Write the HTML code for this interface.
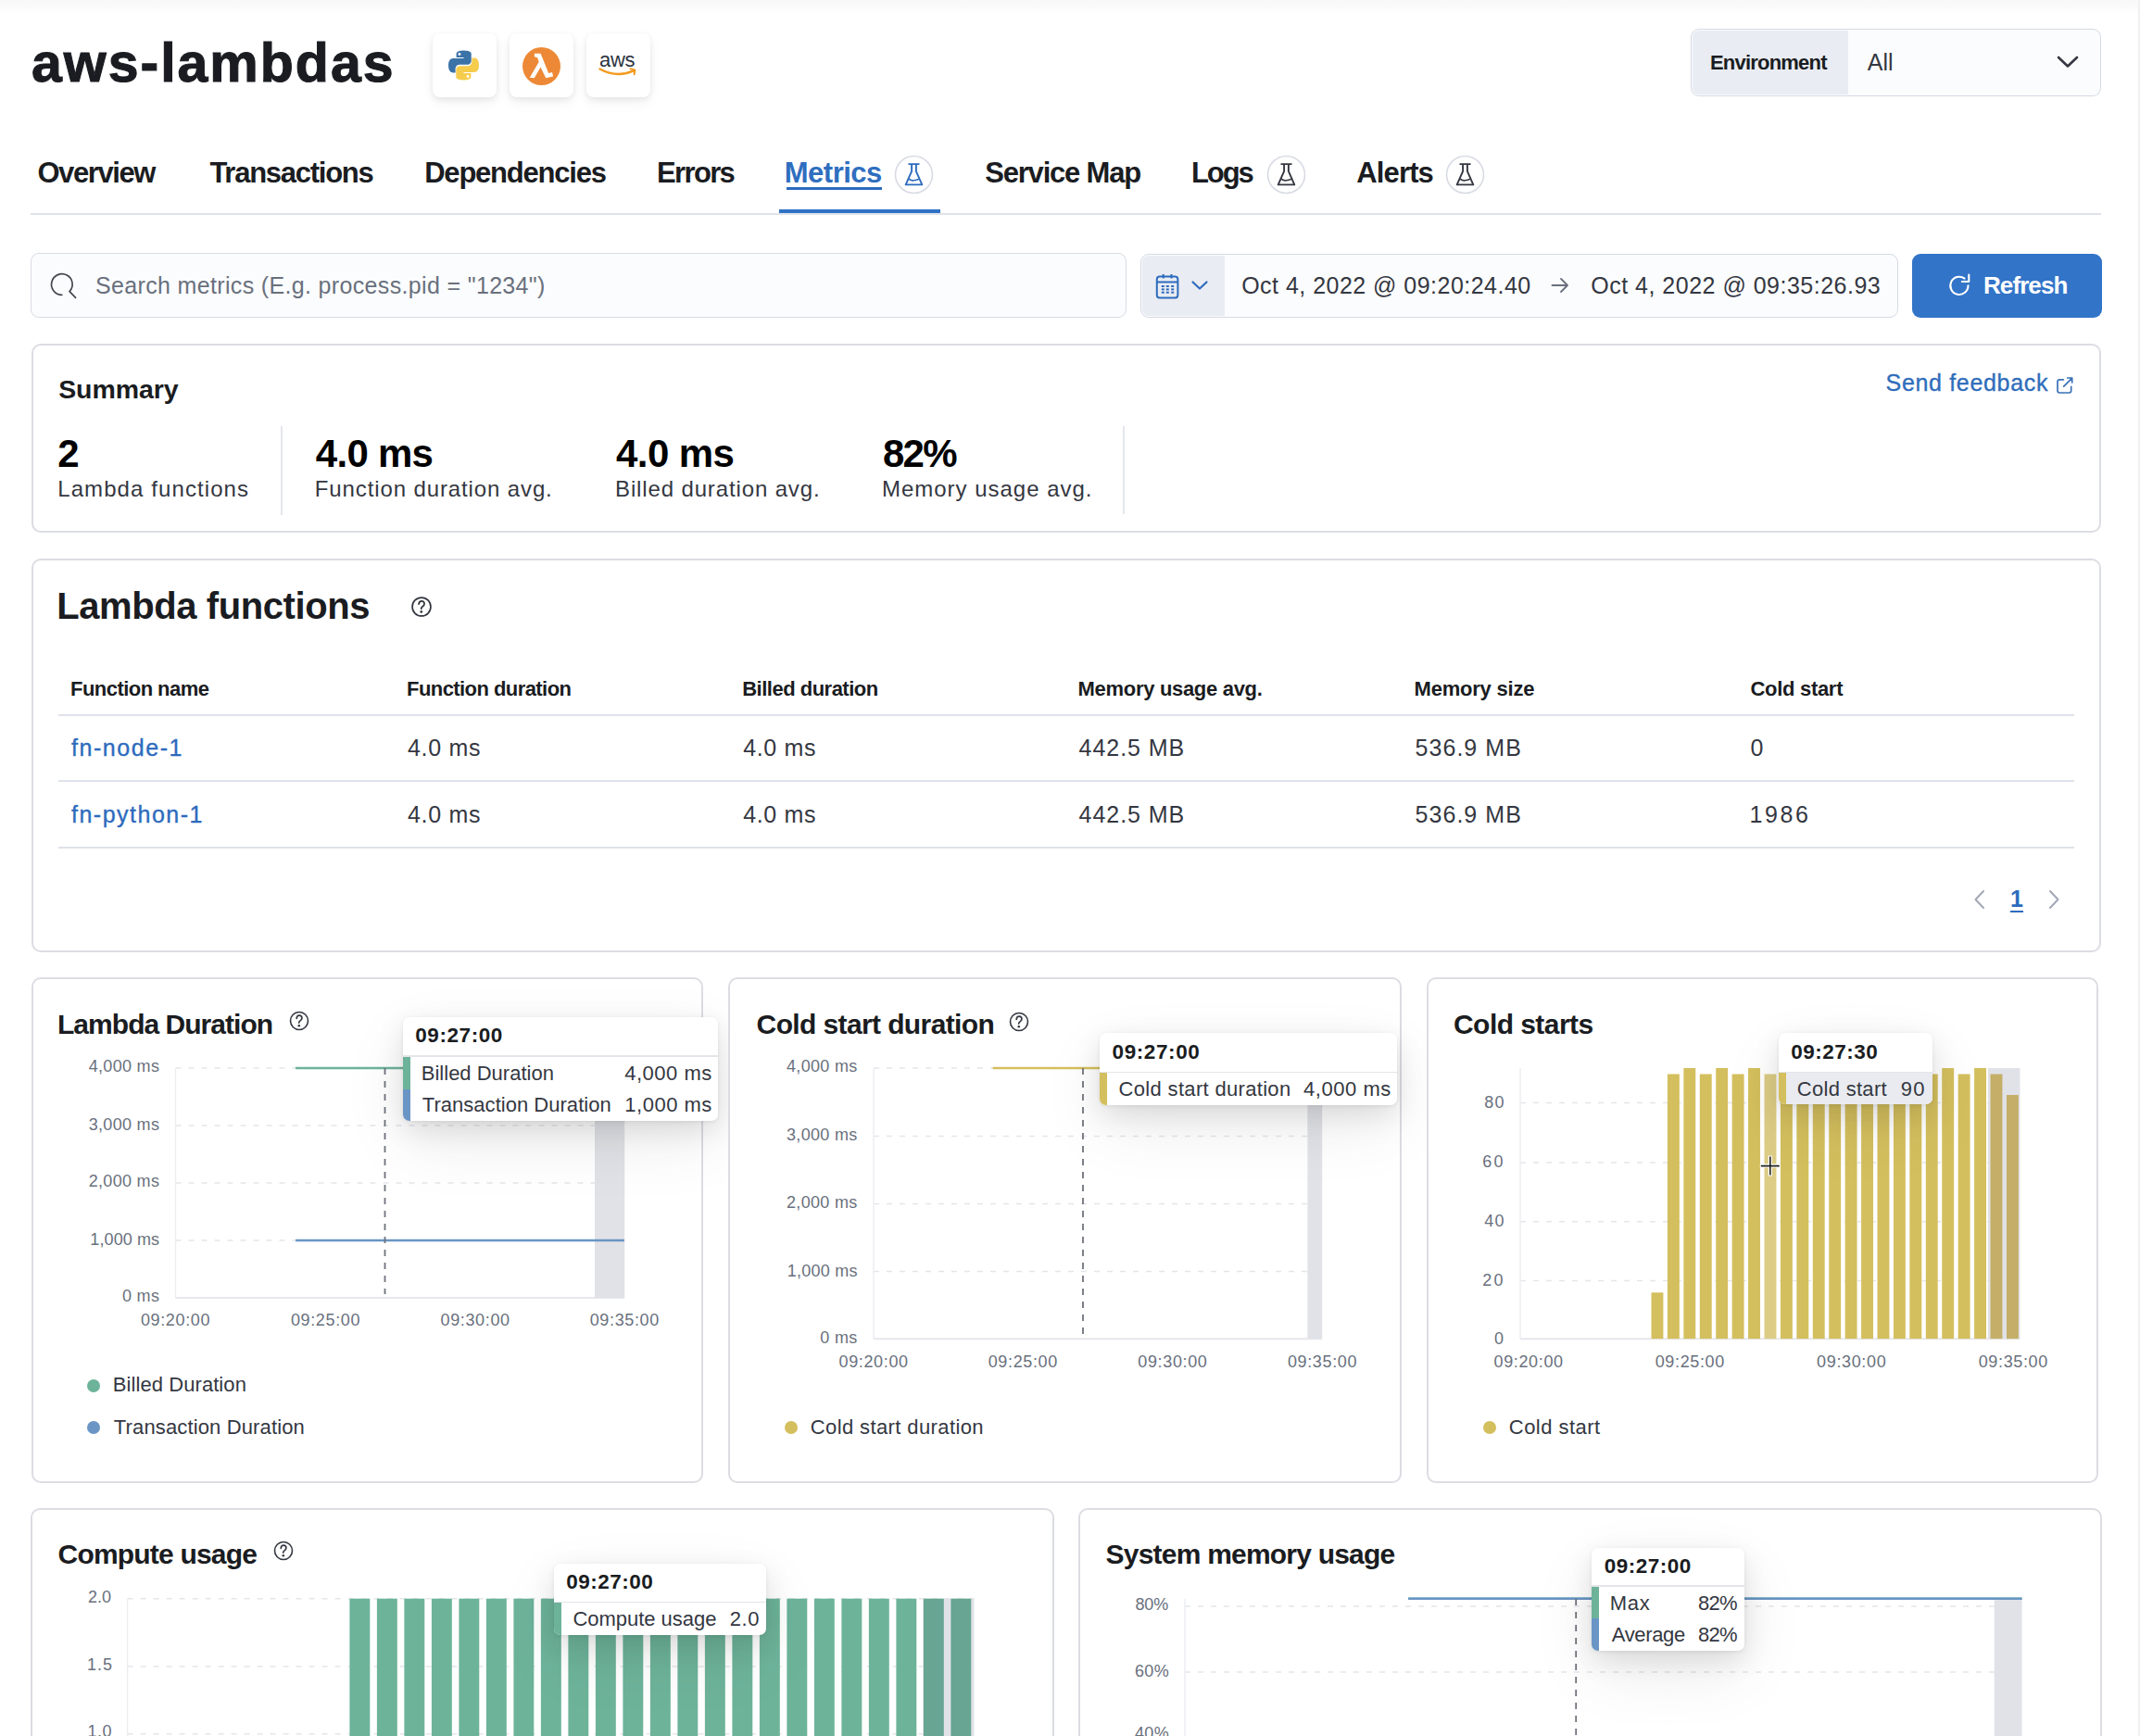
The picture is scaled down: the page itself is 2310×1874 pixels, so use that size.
<!DOCTYPE html><html><head><meta charset="utf-8"><style>
html,body{margin:0;padding:0;background:#fff;width:2310px;height:1874px;overflow:hidden;position:relative}
.t{position:absolute;white-space:nowrap;font-family:"Liberation Sans",sans-serif}
</style></head><body>
<div style="position:absolute;left:0;top:0;width:2310px;height:14px;background:linear-gradient(#f8f8f9,#fefefe)"></div>
<div style="position:absolute;right:0;top:0;width:2px;height:1874px;background:#f0f0f3"></div>
<div id="title" class="t" style="left:34.00px;top:38.65px;font-size:59px;line-height:59px;font-weight:700;color:#1a1c21;letter-spacing:2.000px;-webkit-text-stroke:1.1px #1a1c21;">aws-lambdas</div>
<div style="position:absolute;left:466.5px;top:36px;width:69px;height:69px;background:#fff;border-radius:8px;box-shadow:0 2px 6px rgba(0,0,0,0.08),0 6px 14px rgba(0,0,0,0.05)"></div>
<div style="position:absolute;left:550px;top:36px;width:69px;height:69px;background:#fff;border-radius:8px;box-shadow:0 2px 6px rgba(0,0,0,0.08),0 6px 14px rgba(0,0,0,0.05)"></div>
<div style="position:absolute;left:633.2px;top:36px;width:69px;height:69px;background:#fff;border-radius:8px;box-shadow:0 2px 6px rgba(0,0,0,0.08),0 6px 14px rgba(0,0,0,0.05)"></div>
<svg style="position:absolute;left:484px;top:54px" width="33" height="33" viewBox="0 0 110 110">
<path fill="#3b73a8" d="M54.6 2C27 2 28.7 14 28.7 14v12.4h26.4v3.7H18.2S0 28 0 55.2s15.9 26.2 15.9 26.2h9.5V68.7s-.5-15.9 15.6-15.9h26.3s15.1.2 15.1-14.6V13.9S84.7 2 54.6 2zM40 10.4a4.8 4.8 0 1 1 0 9.6 4.8 4.8 0 0 1 0-9.6z"/>
<path fill="#f5cc4c" d="M55.4 108c27.6 0 25.9-12 25.9-12V83.6H54.9v-3.7h36.9S110 82 110 54.8 94.1 28.6 94.1 28.6h-9.5v12.7s.5 15.9-15.6 15.9H42.7s-15.1-.2-15.1 14.6v24.3S25.3 108 55.4 108zm14.6-8.4a4.8 4.8 0 1 1 0-9.6 4.8 4.8 0 0 1 0 9.6z"/>
</svg>
<svg style="position:absolute;left:564px;top:51px" width="41" height="41" viewBox="0 0 40 40">
<circle cx="20" cy="20" r="20" fill="#ed8936"/>
<path fill="#fff" d="M12.6 6.7 L19.1 6.7 L27.5 27.3 L31.3 26.3 L32.2 30.7 L24.6 32.4 L19.1 21.0 L12.4 32.4 L7.6 32.0 L17.2 15.6 L15.8 10.9 L12.6 10.1 Z"/>
</svg>
<div style="position:absolute;left:647px;top:53.5px;font:400 22px/22px 'Liberation Sans',sans-serif;color:#2b3340;letter-spacing:-0.3px">aws</div>
<svg style="position:absolute;left:645px;top:72px" width="44" height="14" viewBox="0 0 44 14">
<path d="M2.5 2.5 Q21 12.5 39.5 4.2" stroke="#f39a1e" stroke-width="2.4" fill="none" stroke-linecap="round"/>
<path d="M35.5 2.2 L40.5 3.6 L39.6 8.2" stroke="#f39a1e" stroke-width="2" fill="none" stroke-linecap="round" stroke-linejoin="round"/>
</svg>
<div style="position:absolute;left:1824.5px;top:30.5px;width:443px;height:73px;box-sizing:border-box;border:1.8px solid #d5d9e4;border-radius:9px;background:#fbfcfd;overflow:hidden"></div>
<div style="position:absolute;left:1826.5px;top:32.5px;width:168.5px;height:69px;background:#e9ecf2;border-radius:7px 0 0 7px"></div>
<div id="env" class="t" style="left:1846.00px;top:56.60px;font-size:22px;line-height:22px;font-weight:700;color:#1a1c21;letter-spacing:-0.800px;">Environment</div>
<div id="envall" class="t" style="left:2015.80px;top:55.25px;font-size:25px;line-height:25px;font-weight:400;color:#343741;letter-spacing:0.000px;">All</div>
<svg style="position:absolute;left:2219px;top:58px" width="26" height="18" viewBox="0 0 26 18"><path d="M3 4 L13 13.5 L23 4" stroke="#343741" stroke-width="2.6" fill="none" stroke-linecap="round" stroke-linejoin="round"/></svg>
<div id="tab0" class="t" style="left:40.40px;top:171.45px;font-size:31px;line-height:31px;font-weight:700;color:#1a1c21;letter-spacing:-1.400px;">Overview</div>
<div id="tab1" class="t" style="left:226.40px;top:171.45px;font-size:31px;line-height:31px;font-weight:700;color:#1a1c21;letter-spacing:-1.264px;">Transactions</div>
<div id="tab2" class="t" style="left:458.20px;top:171.45px;font-size:31px;line-height:31px;font-weight:700;color:#1a1c21;letter-spacing:-1.218px;">Dependencies</div>
<div id="tab3" class="t" style="left:709.00px;top:171.45px;font-size:31px;line-height:31px;font-weight:700;color:#1a1c21;letter-spacing:-1.640px;">Errors</div>
<div id="tab4" class="t" style="left:846.80px;top:171.45px;font-size:31px;line-height:31px;font-weight:700;color:#2f6ebf;letter-spacing:-0.500px;">Metrics</div>
<div id="tab5" class="t" style="left:1063.20px;top:171.45px;font-size:31px;line-height:31px;font-weight:700;color:#1a1c21;letter-spacing:-1.190px;">Service Map</div>
<div id="tab6" class="t" style="left:1286.00px;top:171.45px;font-size:31px;line-height:31px;font-weight:700;color:#1a1c21;letter-spacing:-2.067px;">Logs</div>
<div id="tab7" class="t" style="left:1464.20px;top:171.45px;font-size:31px;line-height:31px;font-weight:700;color:#1a1c21;letter-spacing:-0.840px;">Alerts</div>
<div style="position:absolute;left:848.5px;top:202.3px;width:103.5px;height:2.4px;background:#2d6bbd"></div>
<div style="position:absolute;left:841px;top:226px;width:173.5px;height:4.5px;background:#2f72c5"></div>
<div style="position:absolute;left:33px;top:229.8px;width:2235px;height:2px;background:#dfe2ea"></div>
<svg style="position:absolute;left:965.4px;top:166.8px" width="43" height="43" viewBox="-21.5 -21.5 43 43">
<circle cx="0" cy="0" r="20" fill="none" stroke="#d8dbe4" stroke-width="1.6"/>
<path d="M-5.3 -11.4 H5.3 M-2.4 -11.4 V-3.6 L-8.8 10.9 H8.8 L2.4 -3.6 V-11.4" stroke="#2d6bbd" stroke-width="1.9" fill="none" stroke-linejoin="round" stroke-linecap="round"/>
<path d="M-5.6 4.3 Q-4 6.8 0 6.3 Q3 6 5.6 4.6" stroke="#2d6bbd" stroke-width="1.6" fill="none"/>
</svg>
<svg style="position:absolute;left:1367.2px;top:166.8px" width="43" height="43" viewBox="-21.5 -21.5 43 43">
<circle cx="0" cy="0" r="20" fill="none" stroke="#d8dbe4" stroke-width="1.6"/>
<path d="M-5.3 -11.4 H5.3 M-2.4 -11.4 V-3.6 L-8.8 10.9 H8.8 L2.4 -3.6 V-11.4" stroke="#343741" stroke-width="1.9" fill="none" stroke-linejoin="round" stroke-linecap="round"/>
<path d="M-5.6 4.3 Q-4 6.8 0 6.3 Q3 6 5.6 4.6" stroke="#343741" stroke-width="1.6" fill="none"/>
</svg>
<svg style="position:absolute;left:1560.2px;top:166.8px" width="43" height="43" viewBox="-21.5 -21.5 43 43">
<circle cx="0" cy="0" r="20" fill="none" stroke="#d8dbe4" stroke-width="1.6"/>
<path d="M-5.3 -11.4 H5.3 M-2.4 -11.4 V-3.6 L-8.8 10.9 H8.8 L2.4 -3.6 V-11.4" stroke="#343741" stroke-width="1.9" fill="none" stroke-linejoin="round" stroke-linecap="round"/>
<path d="M-5.6 4.3 Q-4 6.8 0 6.3 Q3 6 5.6 4.6" stroke="#343741" stroke-width="1.6" fill="none"/>
</svg>
<div style="position:absolute;left:33px;top:273px;width:1183px;height:70px;box-sizing:border-box;border:1.8px solid #d9dce5;border-radius:9px;background:#fbfcfd"></div>
<svg style="position:absolute;left:48.5px;top:288.5px" width="36" height="36" viewBox="-18 -18 36 36"><path d="M-0.2 11.3 A11.3 11.3 0 1 1 8.1 7.7 L14.6 14.4" stroke="#45474f" stroke-width="1.7" fill="none" stroke-linecap="round" stroke-linejoin="miter"/></svg>
<div id="search" class="t" style="left:103.00px;top:295.55px;font-size:25px;line-height:25px;font-weight:400;color:#69707d;letter-spacing:0.341px;">Search metrics (E.g. process.pid = "1234")</div>
<div style="position:absolute;left:1231px;top:273.5px;width:818px;height:69px;box-sizing:border-box;border:1.8px solid #d5d9e4;border-radius:9px;background:#fbfcfd;overflow:hidden"></div>
<div style="position:absolute;left:1233px;top:275.5px;width:89px;height:65px;background:#e9ecf2;border-radius:7px 0 0 7px"></div>
<svg style="position:absolute;left:1246px;top:294px" width="28" height="30" viewBox="0 0 28 30">
<rect x="2.8" y="4.6" width="22.6" height="23" rx="3" stroke="#2d6bbd" stroke-width="2" fill="none"/>
<path d="M2.8 10.6 H25.4 M9.7 2 V6.6 M18.5 2 V6.6" stroke="#2d6bbd" stroke-width="2" fill="none"/>
<g fill="#2d6bbd"><rect x="7.8" y="14" width="3" height="2"/><rect x="12.8" y="14" width="3" height="2"/><rect x="18.2" y="14" width="3" height="2"/>
<rect x="7.8" y="17.4" width="3" height="2"/><rect x="12.8" y="17.4" width="3" height="2"/><rect x="18.2" y="17.4" width="3" height="2"/>
<rect x="7.8" y="20.7" width="3" height="2"/><rect x="12.8" y="20.7" width="3" height="2"/><rect x="18.2" y="20.7" width="3" height="2"/></g>
</svg>
<svg style="position:absolute;left:1285px;top:301px" width="20" height="14" viewBox="0 0 20 14"><path d="M2.5 3.5 L10 10.5 L17.5 3.5" stroke="#2d6bbd" stroke-width="2.2" fill="none" stroke-linecap="round" stroke-linejoin="round"/></svg>
<div id="date1" class="t" style="left:1340.20px;top:295.55px;font-size:25px;line-height:25px;font-weight:400;color:#343741;letter-spacing:0.475px;">Oct 4, 2022 @ 09:20:24.40</div>
<svg style="position:absolute;left:1673px;top:297px" width="22" height="22" viewBox="0 0 22 22"><path d="M2.5 11 H19 M12 4 L19 11 L12 18" stroke="#69707d" stroke-width="1.8" fill="none" stroke-linecap="round" stroke-linejoin="round"/></svg>
<div id="date2" class="t" style="left:1717.20px;top:295.55px;font-size:25px;line-height:25px;font-weight:400;color:#343741;letter-spacing:0.500px;">Oct 4, 2022 @ 09:35:26.93</div>
<div style="position:absolute;left:2063.5px;top:273.5px;width:205px;height:69px;background:#3274c8;border-radius:9px"></div>
<svg style="position:absolute;left:2102.5px;top:294px" width="26" height="28" viewBox="0 0 26 28">
<path d="M21.5 14.3 A9.6 9.6 0 1 1 17.6 6.6" stroke="#fff" stroke-width="2.1" fill="none" stroke-linecap="round"/>
<path d="M22.3 2.5 V10 H14.9" stroke="#fff" stroke-width="2.1" fill="none" stroke-linecap="round" stroke-linejoin="round"/>
</svg>
<div id="refresh" class="t" style="left:2141.00px;top:295.40px;font-size:26px;line-height:26px;font-weight:700;color:#ffffff;letter-spacing:-0.917px;">Refresh</div>
<div style="position:absolute;left:33.6px;top:370.7px;width:2234.5px;height:204.5px;box-sizing:border-box;border:2px solid #dcdde3;border-radius:10px;background:#fff"></div>
<div id="summary" class="t" style="left:63.20px;top:406.27px;font-size:28.5px;line-height:28.5px;font-weight:700;color:#1a1c21;letter-spacing:-0.083px;">Summary</div>
<div id="feedback" class="t" style="left:2035.60px;top:401.25px;font-size:25px;line-height:25px;font-weight:400;color:#2f6dbb;letter-spacing:0.667px;-webkit-text-stroke:0.35px #2f6dbb;">Send feedback</div>
<svg style="position:absolute;left:2210px;top:400px" width="35" height="30" viewBox="0 0 35 30">
<path d="M17.4 9.8 H13.2 Q11 9.8 11 12 V21.8 Q11 24 13.2 24 H23.5 Q25.7 24 25.7 21.8 V17.4" stroke="#3a71b8" stroke-width="1.7" fill="none" stroke-linecap="round"/>
<path d="M17.7 17.2 L26.4 8.4 M21.7 8.0 H26.7 V13.0" stroke="#3a71b8" stroke-width="1.7" fill="none" stroke-linecap="round" stroke-linejoin="round"/>
</svg>
<div id="sv0" class="t" style="left:62.20px;top:468.70px;font-size:42px;line-height:42px;font-weight:700;color:#000000;letter-spacing:0.000px;">2</div>
<div id="sl0" class="t" style="left:62.20px;top:516.40px;font-size:24px;line-height:24px;font-weight:400;color:#343741;letter-spacing:1.093px;">Lambda functions</div>
<div id="sv1" class="t" style="left:340.80px;top:468.70px;font-size:42px;line-height:42px;font-weight:700;color:#000000;letter-spacing:-0.720px;">4.0 ms</div>
<div id="sl1" class="t" style="left:339.80px;top:516.40px;font-size:24px;line-height:24px;font-weight:400;color:#343741;letter-spacing:0.881px;">Function duration avg.</div>
<div id="sv2" class="t" style="left:665.00px;top:468.70px;font-size:42px;line-height:42px;font-weight:700;color:#000000;letter-spacing:-0.560px;">4.0 ms</div>
<div id="sl2" class="t" style="left:664.00px;top:516.40px;font-size:24px;line-height:24px;font-weight:400;color:#343741;letter-spacing:0.868px;">Billed duration avg.</div>
<div id="sv3" class="t" style="left:953.00px;top:468.70px;font-size:42px;line-height:42px;font-weight:700;color:#000000;letter-spacing:-1.750px;">82%</div>
<div id="sl3" class="t" style="left:952.00px;top:516.40px;font-size:24px;line-height:24px;font-weight:400;color:#343741;letter-spacing:0.981px;">Memory usage avg.</div>
<div style="position:absolute;left:303.3px;top:459.8px;width:2px;height:96px;background:#e3e6ed"></div>
<div style="position:absolute;left:1212.3px;top:460px;width:2px;height:95px;background:#e3e6ed"></div>
<div style="position:absolute;left:33.6px;top:602.8px;width:2234.5px;height:425.6px;box-sizing:border-box;border:2px solid #dcdde3;border-radius:10px;background:#fff"></div>
<div id="lftitle" class="t" style="left:61.20px;top:633.50px;font-size:40px;line-height:40px;font-weight:700;color:#1a1c21;letter-spacing:-0.413px;">Lambda functions</div>
<svg style="position:absolute;left:442.7px;top:642.5px" width="24" height="24" viewBox="-12 -12 24 24">
<g transform="scale(1.048)"><circle cx="0" cy="0" r="9.5" stroke="#343741" stroke-width="1.6" fill="none"/>
<path d="M-2.8 -2.7 Q-2.5 -5.9 0.1 -5.9 Q2.9 -5.9 2.9 -3.2 Q2.9 -1.5 1.3 -0.4 Q-0.3 0.7 -0.3 2.1" stroke="#343741" stroke-width="1.7" fill="none" stroke-linecap="round"/>
<circle cx="-0.2" cy="5.2" r="1.3" fill="#343741"/></g>
</svg>
<div id="th0" class="t" style="left:76.00px;top:733.30px;font-size:22px;line-height:22px;font-weight:700;color:#1a1c21;letter-spacing:-0.542px;">Function name</div>
<div id="th1" class="t" style="left:439.00px;top:733.30px;font-size:22px;line-height:22px;font-weight:700;color:#1a1c21;letter-spacing:-0.562px;">Function duration</div>
<div id="th2" class="t" style="left:801.20px;top:733.30px;font-size:22px;line-height:22px;font-weight:700;color:#1a1c21;letter-spacing:-0.500px;">Billed duration</div>
<div id="th3" class="t" style="left:1163.60px;top:733.30px;font-size:22px;line-height:22px;font-weight:700;color:#1a1c21;letter-spacing:-0.312px;">Memory usage avg.</div>
<div id="th4" class="t" style="left:1526.60px;top:733.30px;font-size:22px;line-height:22px;font-weight:700;color:#1a1c21;letter-spacing:-0.220px;">Memory size</div>
<div id="th5" class="t" style="left:1889.40px;top:733.30px;font-size:22px;line-height:22px;font-weight:700;color:#1a1c21;letter-spacing:-0.289px;">Cold start</div>
<div style="position:absolute;left:63px;top:771.2px;width:2176px;height:2px;background:#dfe2ea"></div>
<div id="td00" class="t" style="left:77.00px;top:795.35px;font-size:25px;line-height:25px;font-weight:400;color:#2d6bbd;letter-spacing:1.550px;-webkit-text-stroke:0.35px #2d6bbd;">fn-node-1</div>
<div id="td01" class="t" style="left:440.00px;top:795.35px;font-size:25px;line-height:25px;font-weight:400;color:#343741;letter-spacing:0.700px;">4.0 ms</div>
<div id="td02" class="t" style="left:802.20px;top:795.35px;font-size:25px;line-height:25px;font-weight:400;color:#343741;letter-spacing:0.640px;">4.0 ms</div>
<div id="td03" class="t" style="left:1164.60px;top:795.35px;font-size:25px;line-height:25px;font-weight:400;color:#343741;letter-spacing:0.943px;">442.5 MB</div>
<div id="td04" class="t" style="left:1527.60px;top:795.35px;font-size:25px;line-height:25px;font-weight:400;color:#343741;letter-spacing:1.029px;">536.9 MB</div>
<div id="td05" class="t" style="left:1889.40px;top:795.35px;font-size:25px;line-height:25px;font-weight:400;color:#343741;letter-spacing:0.000px;">0</div>
<div id="td10" class="t" style="left:77.00px;top:867.35px;font-size:25px;line-height:25px;font-weight:400;color:#2d6bbd;letter-spacing:1.500px;-webkit-text-stroke:0.35px #2d6bbd;">fn-python-1</div>
<div id="td11" class="t" style="left:440.00px;top:867.35px;font-size:25px;line-height:25px;font-weight:400;color:#343741;letter-spacing:0.700px;">4.0 ms</div>
<div id="td12" class="t" style="left:802.20px;top:867.35px;font-size:25px;line-height:25px;font-weight:400;color:#343741;letter-spacing:0.640px;">4.0 ms</div>
<div id="td13" class="t" style="left:1164.60px;top:867.35px;font-size:25px;line-height:25px;font-weight:400;color:#343741;letter-spacing:0.943px;">442.5 MB</div>
<div id="td14" class="t" style="left:1527.60px;top:867.35px;font-size:25px;line-height:25px;font-weight:400;color:#343741;letter-spacing:1.029px;">536.9 MB</div>
<div id="td15" class="t" style="left:1888.40px;top:867.35px;font-size:25px;line-height:25px;font-weight:400;color:#343741;letter-spacing:2.600px;">1986</div>
<div style="position:absolute;left:63px;top:842px;width:2176px;height:2px;background:#dfe2ea"></div>
<div style="position:absolute;left:63px;top:913.5px;width:2176px;height:2px;background:#dfe2ea"></div>
<svg style="position:absolute;left:2126px;top:958px" width="22" height="26" viewBox="0 0 22 26"><path d="M15 4 L6.5 13 L15 22" stroke="#a3a8b5" stroke-width="2" fill="none" stroke-linecap="round" stroke-linejoin="round"/></svg>
<div id="pg1" class="t" style="left:2170.00px;top:957.75px;font-size:25px;line-height:25px;font-weight:700;color:#2d6bbd;letter-spacing:0.000px;">1</div>
<div style="position:absolute;left:2170px;top:983px;width:13.5px;height:2.4px;background:#2d6bbd"></div>
<svg style="position:absolute;left:2206px;top:958px" width="22" height="26" viewBox="0 0 22 26"><path d="M7 4 L15.5 13 L7 22" stroke="#a3a8b5" stroke-width="2" fill="none" stroke-linecap="round" stroke-linejoin="round"/></svg>
<div style="position:absolute;left:33.6px;top:1055.4px;width:725.4px;height:545.2px;box-sizing:border-box;border:2px solid #dcdde3;border-radius:10px;background:#fff"></div>
<div id="c1t" class="t" style="left:62.00px;top:1090.50px;font-size:30px;line-height:30px;font-weight:700;color:#1a1c21;letter-spacing:-0.971px;">Lambda Duration</div>
<svg style="position:absolute;left:311.2px;top:1090px" width="24" height="24" viewBox="-12 -12 24 24">
<g transform="scale(1.000)"><circle cx="0" cy="0" r="9.5" stroke="#343741" stroke-width="1.6" fill="none"/>
<path d="M-2.8 -2.7 Q-2.5 -5.9 0.1 -5.9 Q2.9 -5.9 2.9 -3.2 Q2.9 -1.5 1.3 -0.4 Q-0.3 0.7 -0.3 2.1" stroke="#343741" stroke-width="1.7" fill="none" stroke-linecap="round"/>
<circle cx="-0.2" cy="5.2" r="1.3" fill="#343741"/></g>
</svg>
<svg style="position:absolute;left:0;top:0" width="2310" height="1874" viewBox="0 0 2310 1874">
<line x1="189.5" y1="1153" x2="674" y2="1153" stroke="#e5e6ea" stroke-width="1.5" stroke-dasharray="6 8"/>
<line x1="189.5" y1="1215" x2="674" y2="1215" stroke="#e5e6ea" stroke-width="1.5" stroke-dasharray="6 8"/>
<line x1="189.5" y1="1277" x2="674" y2="1277" stroke="#e5e6ea" stroke-width="1.5" stroke-dasharray="6 8"/>
<line x1="189.5" y1="1339" x2="674" y2="1339" stroke="#e5e6ea" stroke-width="1.5" stroke-dasharray="6 8"/>
<line x1="189.5" y1="1153" x2="189.5" y2="1401" stroke="#eceef2" stroke-width="1.5"/>
<line x1="189.5" y1="1401" x2="674" y2="1401" stroke="#e6e8ee" stroke-width="2"/>
<rect x="642" y="1153" width="32.2" height="248" fill="#e1e2e7" />
<line x1="319" y1="1153" x2="674" y2="1153" stroke="#6db39a" stroke-width="2.6"/>
<line x1="319" y1="1339" x2="674" y2="1339" stroke="#6a95c5" stroke-width="2.6"/>
<line x1="415.5" y1="1153" x2="415.5" y2="1397" stroke="#6f737d" stroke-width="1.8" stroke-dasharray="7 7"/>
</svg>
<div id="c1y0" class="t" style="right:2137.80px;top:1142.20px;font-size:18px;line-height:18px;font-weight:400;color:#69707d;letter-spacing:0.300px;">4,000 ms</div>
<div id="c1y1" class="t" style="right:2137.80px;top:1205.00px;font-size:18px;line-height:18px;font-weight:400;color:#69707d;letter-spacing:0.300px;">3,000 ms</div>
<div id="c1y2" class="t" style="right:2137.80px;top:1266.20px;font-size:18px;line-height:18px;font-weight:400;color:#69707d;letter-spacing:0.300px;">2,000 ms</div>
<div id="c1y3" class="t" style="right:2137.80px;top:1328.90px;font-size:18px;line-height:18px;font-weight:400;color:#69707d;letter-spacing:0.100px;">1,000 ms</div>
<div id="c1y4" class="t" style="right:2137.80px;top:1390.20px;font-size:18px;line-height:18px;font-weight:400;color:#69707d;letter-spacing:0.300px;">0 ms</div>
<div id="c1x0" class="t" style="left:189.50px;transform:translateX(-50%);top:1415.70px;font-size:18px;line-height:18px;font-weight:400;color:#69707d;letter-spacing:0.643px;">09:20:00</div>
<div id="c1x1" class="t" style="left:351.50px;transform:translateX(-50%);top:1415.70px;font-size:18px;line-height:18px;font-weight:400;color:#69707d;letter-spacing:0.643px;">09:25:00</div>
<div id="c1x2" class="t" style="left:513.10px;transform:translateX(-50%);top:1415.70px;font-size:18px;line-height:18px;font-weight:400;color:#69707d;letter-spacing:0.643px;">09:30:00</div>
<div id="c1x3" class="t" style="left:674.30px;transform:translateX(-50%);top:1415.70px;font-size:18px;line-height:18px;font-weight:400;color:#69707d;letter-spacing:0.643px;">09:35:00</div>
<div style="position:absolute;left:94px;top:1488.5px;width:14px;height:14px;background:#6db39a;border-radius:50%"></div>
<div id="c1l0" class="t" style="left:121.80px;top:1484.00px;font-size:22px;line-height:22px;font-weight:400;color:#343741;letter-spacing:0.071px;">Billed Duration</div>
<div style="position:absolute;left:94px;top:1534px;width:14px;height:14px;background:#6a95c5;border-radius:50%"></div>
<div id="c1l1" class="t" style="left:122.80px;top:1529.50px;font-size:22px;line-height:22px;font-weight:400;color:#343741;letter-spacing:0.137px;">Transaction Duration</div>
<div style="position:absolute;left:434.5px;top:1097.5px;width:340.5px;height:112.5px;background:#fff;border-radius:7px;box-shadow:0 1px 4px rgba(0,0,0,0.08),0 10px 30px rgba(0,0,0,0.10),0 24px 70px rgba(0,0,0,0.08);overflow:hidden"></div>
<div id="c1tth" class="t" style="left:448.20px;top:1106.58px;font-size:22.5px;line-height:22.5px;font-weight:700;color:#1a1c21;letter-spacing:0.586px;">09:27:00</div>
<div style="position:absolute;left:434.5px;top:1139.2px;width:340.5px;height:1.6px;background:#e3e5ea"></div>
<div style="position:absolute;left:434.5px;top:1140.8px;width:8.2px;height:35.200000000000045px;background:#6db39a;border-radius:0"></div>
<div style="position:absolute;left:434.5px;top:1176px;width:8.2px;height:34px;background:#6a95c5;border-radius:0 0 0 7px"></div>
<div id="c1ttr0" class="t" style="left:454.80px;top:1148.00px;font-size:22px;line-height:22px;font-weight:400;color:#343741;letter-spacing:0.000px;">Billed Duration</div>
<div id="c1ttv0" class="t" style="right:1541.20px;top:1148.00px;font-size:22px;line-height:22px;font-weight:400;color:#343741;letter-spacing:0.514px;">4,000 ms</div>
<div id="c1ttr1" class="t" style="left:455.80px;top:1182.40px;font-size:22px;line-height:22px;font-weight:400;color:#343741;letter-spacing:0.026px;">Transaction Duration</div>
<div id="c1ttv1" class="t" style="right:1541.20px;top:1182.40px;font-size:22px;line-height:22px;font-weight:400;color:#343741;letter-spacing:0.500px;">1,000 ms</div>
<div style="position:absolute;left:786.4px;top:1055.4px;width:726.2px;height:545.2px;box-sizing:border-box;border:2px solid #dcdde3;border-radius:10px;background:#fff"></div>
<div id="c2t" class="t" style="left:816.60px;top:1090.50px;font-size:30px;line-height:30px;font-weight:700;color:#1a1c21;letter-spacing:-0.617px;">Cold start duration</div>
<svg style="position:absolute;left:1087.8px;top:1090.5px" width="24" height="24" viewBox="-12 -12 24 24">
<g transform="scale(1.000)"><circle cx="0" cy="0" r="9.5" stroke="#343741" stroke-width="1.6" fill="none"/>
<path d="M-2.8 -2.7 Q-2.5 -5.9 0.1 -5.9 Q2.9 -5.9 2.9 -3.2 Q2.9 -1.5 1.3 -0.4 Q-0.3 0.7 -0.3 2.1" stroke="#343741" stroke-width="1.7" fill="none" stroke-linecap="round"/>
<circle cx="-0.2" cy="5.2" r="1.3" fill="#343741"/></g>
</svg>
<svg style="position:absolute;left:0;top:0" width="2310" height="1874" viewBox="0 0 2310 1874">
<line x1="943" y1="1153" x2="1427" y2="1153" stroke="#e5e6ea" stroke-width="1.5" stroke-dasharray="6 8"/>
<line x1="943" y1="1226.6" x2="1427" y2="1226.6" stroke="#e5e6ea" stroke-width="1.5" stroke-dasharray="6 8"/>
<line x1="943" y1="1299.5" x2="1427" y2="1299.5" stroke="#e5e6ea" stroke-width="1.5" stroke-dasharray="6 8"/>
<line x1="943" y1="1372.4" x2="1427" y2="1372.4" stroke="#e5e6ea" stroke-width="1.5" stroke-dasharray="6 8"/>
<line x1="943" y1="1153" x2="943" y2="1445" stroke="#eceef2" stroke-width="1.5"/>
<line x1="943" y1="1445.2" x2="1427" y2="1445.2" stroke="#e6e8ee" stroke-width="2"/>
<rect x="1411.4" y="1153" width="15.8" height="292" fill="#e1e2e7" />
<line x1="1071.7" y1="1153" x2="1427" y2="1153" stroke="#d4bf5e" stroke-width="2.6"/>
<line x1="1169" y1="1153" x2="1169" y2="1445" stroke="#6f737d" stroke-width="1.8" stroke-dasharray="7 7"/>
</svg>
<div id="c2y0" class="t" style="right:1384.40px;top:1142.20px;font-size:18px;line-height:18px;font-weight:400;color:#69707d;letter-spacing:0.314px;">4,000 ms</div>
<div id="c2y1" class="t" style="right:1384.40px;top:1216.00px;font-size:18px;line-height:18px;font-weight:400;color:#69707d;letter-spacing:0.314px;">3,000 ms</div>
<div id="c2y2" class="t" style="right:1384.40px;top:1288.90px;font-size:18px;line-height:18px;font-weight:400;color:#69707d;letter-spacing:0.314px;">2,000 ms</div>
<div id="c2y3" class="t" style="right:1384.40px;top:1362.80px;font-size:18px;line-height:18px;font-weight:400;color:#69707d;letter-spacing:0.214px;">1,000 ms</div>
<div id="c2y4" class="t" style="right:1384.40px;top:1435.00px;font-size:18px;line-height:18px;font-weight:400;color:#69707d;letter-spacing:0.333px;">0 ms</div>
<div id="c2x0" class="t" style="left:943.10px;transform:translateX(-50%);top:1461.20px;font-size:18px;line-height:18px;font-weight:400;color:#69707d;letter-spacing:0.643px;">09:20:00</div>
<div id="c2x1" class="t" style="left:1104.30px;transform:translateX(-50%);top:1461.20px;font-size:18px;line-height:18px;font-weight:400;color:#69707d;letter-spacing:0.643px;">09:25:00</div>
<div id="c2x2" class="t" style="left:1265.90px;transform:translateX(-50%);top:1461.20px;font-size:18px;line-height:18px;font-weight:400;color:#69707d;letter-spacing:0.643px;">09:30:00</div>
<div id="c2x3" class="t" style="left:1427.50px;transform:translateX(-50%);top:1461.20px;font-size:18px;line-height:18px;font-weight:400;color:#69707d;letter-spacing:0.643px;">09:35:00</div>
<div style="position:absolute;left:847px;top:1534px;width:14px;height:14px;background:#d4bf5e;border-radius:50%"></div>
<div id="c2l0" class="t" style="left:874.80px;top:1529.50px;font-size:22px;line-height:22px;font-weight:400;color:#343741;letter-spacing:0.389px;">Cold start duration</div>
<div style="position:absolute;left:1187.3px;top:1115.4px;width:320.70000000000005px;height:77.59999999999991px;background:#fff;border-radius:7px;box-shadow:0 1px 4px rgba(0,0,0,0.08),0 10px 30px rgba(0,0,0,0.10),0 24px 70px rgba(0,0,0,0.08);overflow:hidden"></div>
<div id="c2tth" class="t" style="left:1200.60px;top:1124.78px;font-size:22.5px;line-height:22.5px;font-weight:700;color:#1a1c21;letter-spacing:0.586px;">09:27:00</div>
<div style="position:absolute;left:1187.3px;top:1156.5px;width:320.70000000000005px;height:1.6px;background:#e3e5ea"></div>
<div style="position:absolute;left:1187.3px;top:1158px;width:8.2px;height:35px;background:#d4bf5e;border-radius:0 0 0 7px"></div>
<div id="c2ttr0" class="t" style="left:1207.60px;top:1165.20px;font-size:22px;line-height:22px;font-weight:400;color:#343741;letter-spacing:0.322px;">Cold start duration</div>
<div id="c2ttv0" class="t" style="right:808.20px;top:1165.20px;font-size:22px;line-height:22px;font-weight:400;color:#343741;letter-spacing:0.529px;">4,000 ms</div>
<div style="position:absolute;left:1540px;top:1055.4px;width:725.3px;height:545.2px;box-sizing:border-box;border:2px solid #dcdde3;border-radius:10px;background:#fff"></div>
<div id="c3t" class="t" style="left:1569.00px;top:1090.50px;font-size:30px;line-height:30px;font-weight:700;color:#1a1c21;letter-spacing:-0.550px;">Cold starts</div>
<svg style="position:absolute;left:0;top:0" width="2310" height="1874" viewBox="0 0 2310 1874">
<line x1="1641" y1="1190.5" x2="2180.5" y2="1190.5" stroke="#e5e6ea" stroke-width="1.5" stroke-dasharray="6 8"/>
<line x1="1641" y1="1255" x2="2180.5" y2="1255" stroke="#e5e6ea" stroke-width="1.5" stroke-dasharray="6 8"/>
<line x1="1641" y1="1318.8" x2="2180.5" y2="1318.8" stroke="#e5e6ea" stroke-width="1.5" stroke-dasharray="6 8"/>
<line x1="1641" y1="1382.6" x2="2180.5" y2="1382.6" stroke="#e5e6ea" stroke-width="1.5" stroke-dasharray="6 8"/>
<line x1="1641" y1="1153" x2="1641" y2="1445" stroke="#eceef2" stroke-width="1.5"/>
<line x1="1641" y1="1445.2" x2="2180.5" y2="1445.2" stroke="#e6e8ee" stroke-width="2"/>
<rect x="2145.9" y="1153" width="34.6" height="292" fill="#e1e2e7" />
<rect x="1782.50" y="1395.3" width="12.9" height="49.90000000000009" fill="#d4bf5e" />
<rect x="1799.93" y="1159.5" width="12.9" height="285.70000000000005" fill="#d4bf5e" />
<rect x="1817.36" y="1153" width="12.9" height="292.20000000000005" fill="#d4bf5e" />
<rect x="1834.79" y="1159.5" width="12.9" height="285.70000000000005" fill="#d4bf5e" />
<rect x="1852.22" y="1153" width="12.9" height="292.20000000000005" fill="#d4bf5e" />
<rect x="1869.65" y="1159.5" width="12.9" height="285.70000000000005" fill="#d4bf5e" />
<rect x="1887.08" y="1153" width="12.9" height="292.20000000000005" fill="#d4bf5e" />
<rect x="1904.51" y="1159.5" width="12.9" height="285.70000000000005" fill="#ddcc86" />
<rect x="1921.94" y="1153" width="12.9" height="292.20000000000005" fill="#d4bf5e" />
<rect x="1939.37" y="1159.5" width="12.9" height="285.70000000000005" fill="#d4bf5e" />
<rect x="1956.80" y="1153" width="12.9" height="292.20000000000005" fill="#d4bf5e" />
<rect x="1974.23" y="1159.5" width="12.9" height="285.70000000000005" fill="#d4bf5e" />
<rect x="1991.66" y="1153" width="12.9" height="292.20000000000005" fill="#d4bf5e" />
<rect x="2009.09" y="1159.5" width="12.9" height="285.70000000000005" fill="#d4bf5e" />
<rect x="2026.52" y="1153" width="12.9" height="292.20000000000005" fill="#d4bf5e" />
<rect x="2043.95" y="1159.5" width="12.9" height="285.70000000000005" fill="#d4bf5e" />
<rect x="2061.38" y="1153" width="12.9" height="292.20000000000005" fill="#d4bf5e" />
<rect x="2078.81" y="1159.5" width="12.9" height="285.70000000000005" fill="#d4bf5e" />
<rect x="2096.24" y="1153" width="12.9" height="292.20000000000005" fill="#d4bf5e" />
<rect x="2113.67" y="1159.5" width="12.9" height="285.70000000000005" fill="#d4bf5e" />
<rect x="2131.10" y="1153" width="12.9" height="292.20000000000005" fill="#d4bf5e" />
<rect x="2148.53" y="1159.5" width="12.9" height="285.70000000000005" fill="#c4ae68" />
<rect x="2165.96" y="1182" width="12.9" height="263.20000000000005" fill="#c4ae68" />
<path d="M1899.8 1258.6 H1921.8 M1910.8 1247.6 V1269.6" stroke="#fff" stroke-width="4"/>
<path d="M1900.8 1258.6 H1920.8 M1910.8 1248.6 V1268.6" stroke="#222" stroke-width="1.6"/>
</svg>
<div id="c3y0" class="t" style="right:685.00px;top:1180.60px;font-size:18px;line-height:18px;font-weight:400;color:#69707d;letter-spacing:1.400px;">80</div>
<div id="c3y1" class="t" style="right:685.00px;top:1245.20px;font-size:18px;line-height:18px;font-weight:400;color:#69707d;letter-spacing:2.400px;">60</div>
<div id="c3y2" class="t" style="right:685.00px;top:1308.90px;font-size:18px;line-height:18px;font-weight:400;color:#69707d;letter-spacing:1.400px;">40</div>
<div id="c3y3" class="t" style="right:685.00px;top:1372.70px;font-size:18px;line-height:18px;font-weight:400;color:#69707d;letter-spacing:2.400px;">20</div>
<div id="c3y4" class="t" style="right:687.00px;top:1435.70px;font-size:18px;line-height:18px;font-weight:400;color:#69707d;letter-spacing:0.000px;">0</div>
<div id="c3x0" class="t" style="left:1650.10px;transform:translateX(-50%);top:1461.20px;font-size:18px;line-height:18px;font-weight:400;color:#69707d;letter-spacing:0.643px;">09:20:00</div>
<div id="c3x1" class="t" style="left:1824.30px;transform:translateX(-50%);top:1461.20px;font-size:18px;line-height:18px;font-weight:400;color:#69707d;letter-spacing:0.643px;">09:25:00</div>
<div id="c3x2" class="t" style="left:1998.70px;transform:translateX(-50%);top:1461.20px;font-size:18px;line-height:18px;font-weight:400;color:#69707d;letter-spacing:0.643px;">09:30:00</div>
<div id="c3x3" class="t" style="left:2173.30px;transform:translateX(-50%);top:1461.20px;font-size:18px;line-height:18px;font-weight:400;color:#69707d;letter-spacing:0.643px;">09:35:00</div>
<div style="position:absolute;left:1601px;top:1534px;width:14px;height:14px;background:#d4bf5e;border-radius:50%"></div>
<div id="c3l0" class="t" style="left:1628.80px;top:1529.50px;font-size:22px;line-height:22px;font-weight:400;color:#343741;letter-spacing:0.456px;">Cold start</div>
<div style="position:absolute;left:1920px;top:1115.4px;width:165.80000000000018px;height:76.89999999999986px;background:#fff;border-radius:7px;box-shadow:0 1px 4px rgba(0,0,0,0.08),0 10px 30px rgba(0,0,0,0.10),0 24px 70px rgba(0,0,0,0.08);overflow:hidden"></div>
<div style="position:absolute;left:1920px;top:1157.3px;width:165.80000000000018px;height:35.0px;background:#e9ebf0;border-radius:0 0 7px 7px"></div>
<div id="c3tth" class="t" style="left:1933.20px;top:1124.78px;font-size:22.5px;line-height:22.5px;font-weight:700;color:#1a1c21;letter-spacing:0.486px;">09:27:30</div>
<div style="position:absolute;left:1920px;top:1156.5px;width:165.80000000000018px;height:1.6px;background:#e3e5ea"></div>
<div style="position:absolute;left:1920px;top:1158px;width:8.2px;height:34.299999999999955px;background:#d4bf5e;border-radius:0 0 0 7px"></div>
<div id="c3ttr0" class="t" style="left:1939.80px;top:1165.20px;font-size:22px;line-height:22px;font-weight:400;color:#343741;letter-spacing:0.300px;">Cold start</div>
<div id="c3ttv0" class="t" style="right:231.40px;top:1165.20px;font-size:22px;line-height:22px;font-weight:400;color:#343741;letter-spacing:1.200px;">90</div>
<div style="position:absolute;left:33.3px;top:1628.4px;width:1104.3px;height:420px;box-sizing:border-box;border:2px solid #dcdde3;border-radius:10px;background:#fff"></div>
<div id="c4t" class="t" style="left:62.60px;top:1663.20px;font-size:30px;line-height:30px;font-weight:700;color:#1a1c21;letter-spacing:-0.808px;">Compute usage</div>
<svg style="position:absolute;left:294px;top:1662.2px" width="24" height="24" viewBox="-12 -12 24 24">
<g transform="scale(1.000)"><circle cx="0" cy="0" r="9.5" stroke="#343741" stroke-width="1.6" fill="none"/>
<path d="M-2.8 -2.7 Q-2.5 -5.9 0.1 -5.9 Q2.9 -5.9 2.9 -3.2 Q2.9 -1.5 1.3 -0.4 Q-0.3 0.7 -0.3 2.1" stroke="#343741" stroke-width="1.7" fill="none" stroke-linecap="round"/>
<circle cx="-0.2" cy="5.2" r="1.3" fill="#343741"/></g>
</svg>
<svg style="position:absolute;left:0;top:0" width="2310" height="1874" viewBox="0 0 2310 1874">
<line x1="137.6" y1="1725.7" x2="1051.5" y2="1725.7" stroke="#e5e6ea" stroke-width="1.5" stroke-dasharray="6 8"/>
<line x1="137.6" y1="1798.9" x2="1051.5" y2="1798.9" stroke="#e5e6ea" stroke-width="1.5" stroke-dasharray="6 8"/>
<line x1="137.6" y1="1871.8" x2="1051.5" y2="1871.8" stroke="#e5e6ea" stroke-width="1.5" stroke-dasharray="6 8"/>
<line x1="137.6" y1="1725.7" x2="137.6" y2="1874" stroke="#eceef2" stroke-width="1.5"/>
<rect x="996.2" y="1725.7" width="55.3" height="150" fill="#e1e2e7" />
<rect x="377.40" y="1725.7" width="21.9" height="150" fill="#6db39a" />
<rect x="406.90" y="1725.7" width="21.9" height="150" fill="#6db39a" />
<rect x="436.40" y="1725.7" width="21.9" height="150" fill="#6db39a" />
<rect x="465.90" y="1725.7" width="21.9" height="150" fill="#6db39a" />
<rect x="495.40" y="1725.7" width="21.9" height="150" fill="#6db39a" />
<rect x="524.90" y="1725.7" width="21.9" height="150" fill="#6db39a" />
<rect x="554.40" y="1725.7" width="21.9" height="150" fill="#6db39a" />
<rect x="583.90" y="1725.7" width="21.9" height="150" fill="#6db39a" />
<rect x="613.40" y="1725.7" width="21.9" height="150" fill="#6db39a" />
<rect x="642.90" y="1725.7" width="21.9" height="150" fill="#6db39a" />
<rect x="672.40" y="1725.7" width="21.9" height="150" fill="#6db39a" />
<rect x="701.90" y="1725.7" width="21.9" height="150" fill="#6db39a" />
<rect x="731.40" y="1725.7" width="21.9" height="150" fill="#6db39a" />
<rect x="760.90" y="1725.7" width="21.9" height="150" fill="#6db39a" />
<rect x="790.40" y="1725.7" width="21.9" height="150" fill="#6db39a" />
<rect x="819.90" y="1725.7" width="21.9" height="150" fill="#6db39a" />
<rect x="849.40" y="1725.7" width="21.9" height="150" fill="#6db39a" />
<rect x="878.90" y="1725.7" width="21.9" height="150" fill="#6db39a" />
<rect x="908.40" y="1725.7" width="21.9" height="150" fill="#6db39a" />
<rect x="937.90" y="1725.7" width="21.9" height="150" fill="#6db39a" />
<rect x="967.40" y="1725.7" width="21.9" height="150" fill="#6db39a" />
<rect x="996.90" y="1725.7" width="21.9" height="150" fill="#68a592" />
<rect x="1026.40" y="1725.7" width="21.9" height="150" fill="#68a592" />
</svg>
<div id="c4y0" class="t" style="right:2189.80px;top:1714.80px;font-size:18px;line-height:18px;font-weight:400;color:#69707d;letter-spacing:0.100px;">2.0</div>
<div id="c4y1" class="t" style="right:2187.80px;top:1787.90px;font-size:18px;line-height:18px;font-weight:400;color:#69707d;letter-spacing:1.100px;">1.5</div>
<div id="c4y2" class="t" style="right:2188.80px;top:1859.50px;font-size:18px;line-height:18px;font-weight:400;color:#69707d;letter-spacing:0.600px;">1.0</div>
<div style="position:absolute;left:597.6px;top:1687.6px;width:229.69999999999993px;height:77.20000000000005px;background:#fff;border-radius:7px;box-shadow:0 1px 4px rgba(0,0,0,0.08),0 10px 30px rgba(0,0,0,0.10),0 24px 70px rgba(0,0,0,0.08);overflow:hidden"></div>
<div id="c4tth" class="t" style="left:611.20px;top:1696.88px;font-size:22.5px;line-height:22.5px;font-weight:700;color:#1a1c21;letter-spacing:0.500px;">09:27:00</div>
<div style="position:absolute;left:597.6px;top:1728.7px;width:229.69999999999993px;height:1.6px;background:#e3e5ea"></div>
<div style="position:absolute;left:597.6px;top:1730px;width:8.2px;height:34.799999999999955px;background:#6db39a;border-radius:0 0 0 7px"></div>
<div id="c4ttr0" class="t" style="left:618.40px;top:1737.00px;font-size:22px;line-height:22px;font-weight:400;color:#343741;letter-spacing:-0.025px;">Compute usage</div>
<div id="c4ttv0" class="t" style="right:1489.80px;top:1737.00px;font-size:22px;line-height:22px;font-weight:400;color:#343741;letter-spacing:0.650px;">2.0</div>
<div style="position:absolute;left:1164.2px;top:1628.4px;width:1104.4px;height:420px;box-sizing:border-box;border:2px solid #dcdde3;border-radius:10px;background:#fff"></div>
<div id="c5t" class="t" style="left:1193.60px;top:1663.20px;font-size:30px;line-height:30px;font-weight:700;color:#1a1c21;letter-spacing:-0.789px;">System memory usage</div>
<svg style="position:absolute;left:0;top:0" width="2310" height="1874" viewBox="0 0 2310 1874">
<line x1="1279" y1="1733.9" x2="2182.5" y2="1733.9" stroke="#e5e6ea" stroke-width="1.5" stroke-dasharray="6 8"/>
<line x1="1279" y1="1804.9" x2="2182.5" y2="1804.9" stroke="#e5e6ea" stroke-width="1.5" stroke-dasharray="6 8"/>
<line x1="1279" y1="1876" x2="2182.5" y2="1876" stroke="#e5e6ea" stroke-width="1.5" stroke-dasharray="6 8"/>
<line x1="1279" y1="1726" x2="1279" y2="1874" stroke="#eceef2" stroke-width="1.5"/>
<rect x="2152.7" y="1725.7" width="29.8" height="150" fill="#e1e2e7" />
<line x1="1520.2" y1="1725.7" x2="2182.5" y2="1725.7" stroke="#6db39a" stroke-width="2.6"/>
<line x1="1520.2" y1="1725.7" x2="2182.5" y2="1725.7" stroke="#6a95c5" stroke-width="2.6"/>
<line x1="1701.2" y1="1726" x2="1701.2" y2="1874" stroke="#6f737d" stroke-width="1.8" stroke-dasharray="7 7"/>
</svg>
<div id="c5y0" class="t" style="right:1049.00px;top:1722.90px;font-size:18px;line-height:18px;font-weight:400;color:#69707d;letter-spacing:-0.200px;">80%</div>
<div id="c5y1" class="t" style="right:1048.00px;top:1794.50px;font-size:18px;line-height:18px;font-weight:400;color:#69707d;letter-spacing:0.300px;">60%</div>
<div id="c5y2" class="t" style="right:1048.00px;top:1862.20px;font-size:18px;line-height:18px;font-weight:400;color:#69707d;letter-spacing:0.300px;">40%</div>
<div style="position:absolute;left:1718px;top:1670.5px;width:165.29999999999995px;height:111.09999999999991px;background:#fff;border-radius:7px;box-shadow:0 1px 4px rgba(0,0,0,0.08),0 10px 30px rgba(0,0,0,0.10),0 24px 70px rgba(0,0,0,0.08);overflow:hidden"></div>
<div id="c5tth" class="t" style="left:1731.80px;top:1679.88px;font-size:22.5px;line-height:22.5px;font-weight:700;color:#1a1c21;letter-spacing:0.500px;">09:27:00</div>
<div style="position:absolute;left:1718px;top:1711.4px;width:165.29999999999995px;height:1.6px;background:#e3e5ea"></div>
<div style="position:absolute;left:1718px;top:1713px;width:8.2px;height:34px;background:#6db39a;border-radius:0"></div>
<div style="position:absolute;left:1718px;top:1747px;width:8.2px;height:34.59999999999991px;background:#6a95c5;border-radius:0 0 0 7px"></div>
<div id="c5ttr0" class="t" style="left:1737.80px;top:1720.20px;font-size:22px;line-height:22px;font-weight:400;color:#343741;letter-spacing:0.650px;">Max</div>
<div id="c5ttv0" class="t" style="right:435.20px;top:1720.20px;font-size:22px;line-height:22px;font-weight:400;color:#343741;letter-spacing:-0.700px;">82%</div>
<div id="c5ttr1" class="t" style="left:1739.80px;top:1754.40px;font-size:22px;line-height:22px;font-weight:400;color:#343741;letter-spacing:-0.367px;">Average</div>
<div id="c5ttv1" class="t" style="right:435.20px;top:1754.40px;font-size:22px;line-height:22px;font-weight:400;color:#343741;letter-spacing:-0.700px;">82%</div>
</body></html>
